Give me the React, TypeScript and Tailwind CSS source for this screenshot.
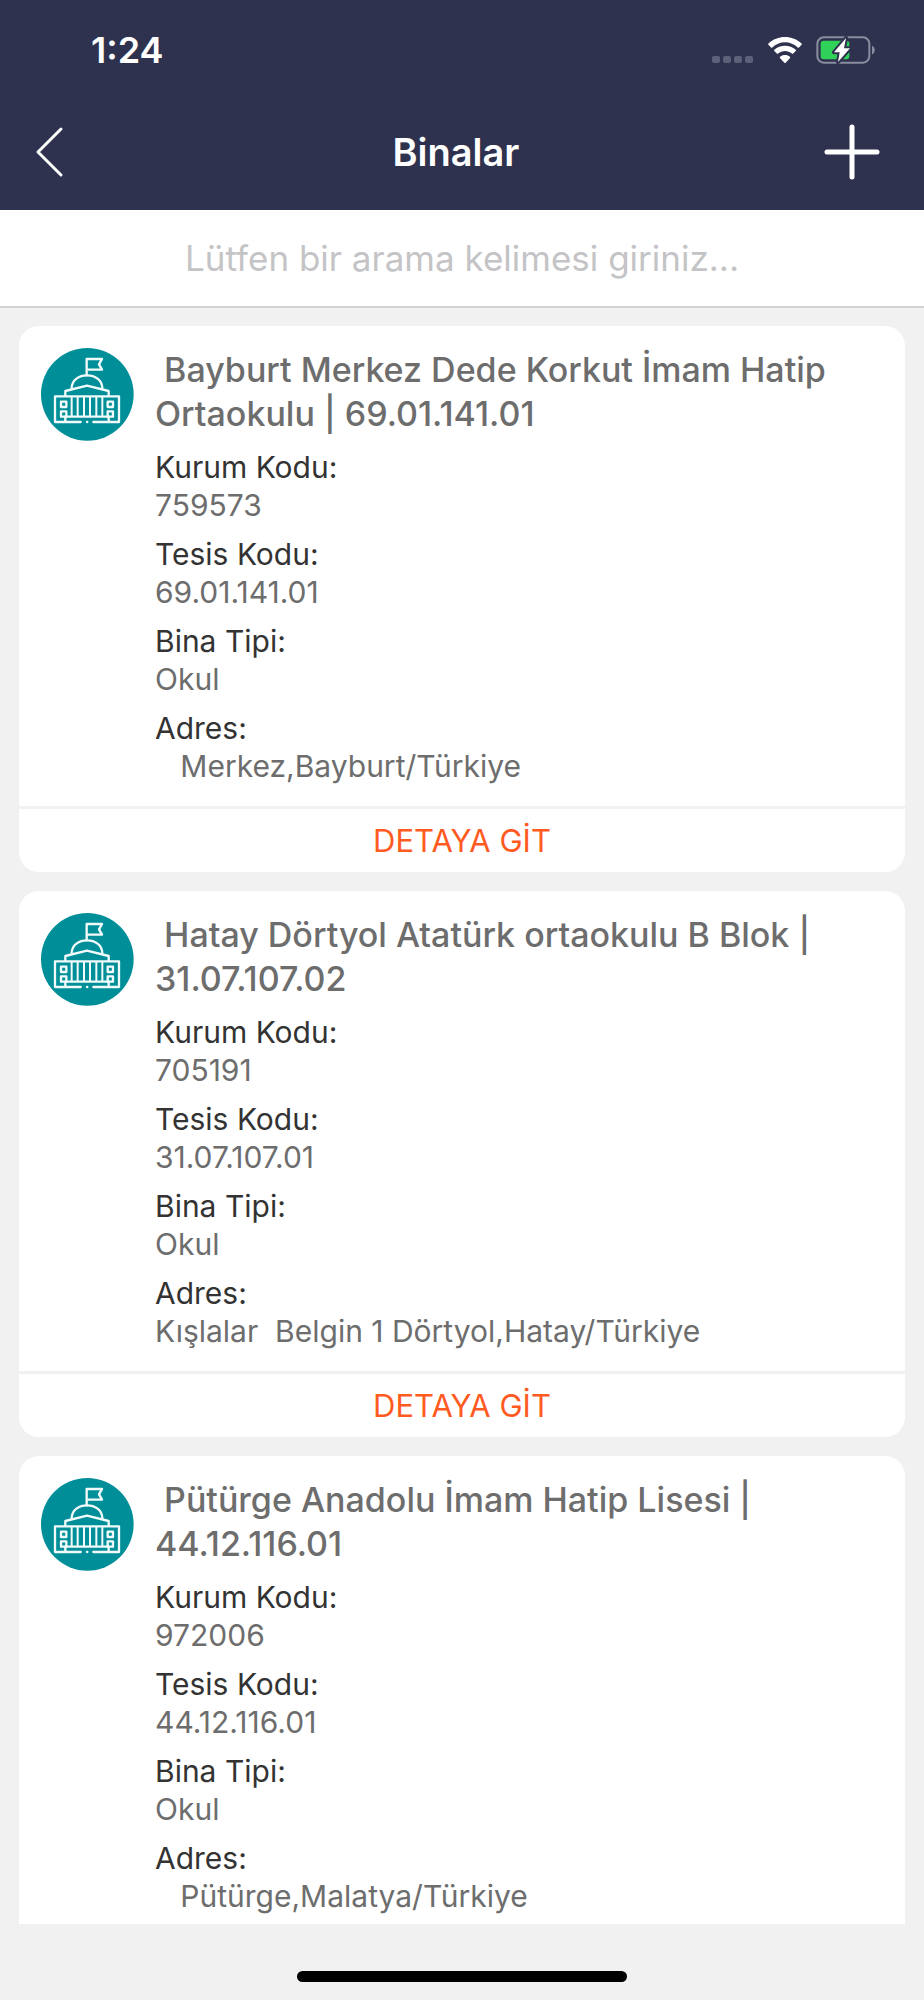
import React from 'react'

type Building = {
  title: string
  kurumKodu: string
  tesisKodu: string
  binaTipi: string
  adres: string
}

const buildings: Building[] = [
  {
    title: '\u00a0Bayburt Merkez Dede Korkut İmam Hatip Ortaokulu | 69.01.141.01',
    kurumKodu: '759573',
    tesisKodu: '69.01.141.01',
    binaTipi: 'Okul',
    adres: '   Merkez,Bayburt/Türkiye',
  },
  {
    title: '\u00a0Hatay Dörtyol Atatürk ortaokulu B Blok | 31.07.107.02',
    kurumKodu: '705191',
    tesisKodu: '31.07.107.01',
    binaTipi: 'Okul',
    adres: 'Kışlalar  Belgin 1 Dörtyol,Hatay/Türkiye',
  },
  {
    title: '\u00a0Pütürge Anadolu İmam Hatip Lisesi | 44.12.116.01',
    kurumKodu: '972006',
    tesisKodu: '44.12.116.01',
    binaTipi: 'Okul',
    adres: '   Pütürge,Malatya/Türkiye',
  },
]

const StatusBar = () => (
  <div className="flex h-[100px] items-center justify-between pr-12 pl-[91px]">
    <span className="text-[36px] leading-10 font-semibold">1:24</span>
    <div className="flex items-center gap-[13px]">
      <svg width="42" height="26" viewBox="0 0 42 26" fill="#5c6079">
        <rect x="0" y="19" width="8" height="7" rx="2" />
        <rect x="11" y="19" width="8" height="7" rx="2" />
        <rect x="22" y="19" width="8" height="7" rx="2" />
        <rect x="33" y="19" width="8" height="7" rx="2" />
      </svg>
      <svg width="36" height="26" viewBox="0 0 108 80" fill="#fff">
        <path d="M54 16 C69 16 83 22 93 32 Q95 34 97 32 L105 24 Q107 22 105 20 C91 7 73 0 54 0 C35 0 17 7 3 20 Q1 22 3 24 L11 32 Q13 34 15 32 C25 22 39 16 54 16 Z" />
        <path d="M54 43 C62 43 69 46 75 51 Q77 53 79 51 L87 43 Q89 41 87 39 C78 31 66 27 54 27 C42 27 30 31 21 39 Q19 41 21 43 L29 51 Q31 53 33 51 C39 46 46 43 54 43 Z" />
        <path d="M69 61 Q71 63 69 65 L56 79 Q54 81 52 79 L39 65 Q37 63 39 61 C43 57 48 55 54 55 C60 55 65 57 69 61 Z" />
      </svg>
      <svg width="60" height="28" viewBox="0 0 180 84" fill="none">
        <rect x="4" y="4" width="156" height="76" rx="19" stroke="#8a8d9f" strokeWidth="6" />
        <path d="M168 29 C179 33 179 51 168 55 Z" fill="#8a8d9f" />
        <rect x="14" y="14" width="86" height="56" rx="9" fill="#30d158" />
        <path
          d="M90 6 L54 49 H71 L66 78 L102 37 H84 Z"
          fill="#fff"
          stroke="#2e324f"
          strokeWidth="12"
          strokeLinejoin="round"
          paintOrder="stroke"
        />
      </svg>
    </div>
  </div>
)

const NavBar = () => (
  <nav className="grid h-[104px] grid-cols-[1fr_auto_1fr] items-center pr-11 pl-8">
    <button aria-label="Geri" className="justify-self-start">
      <svg width="34" height="56" viewBox="0 0 34 56" fill="none" stroke="#fff" strokeWidth="3" strokeLinecap="round" strokeLinejoin="round">
        <path d="M29 5 L6 28 L29 51" />
      </svg>
    </button>
    <h1 className="text-[38px] leading-[44px] font-semibold">Binalar</h1>
    <button aria-label="Ekle" className="justify-self-end">
      <svg width="56" height="56" viewBox="0 0 56 56" fill="none" stroke="#fff" strokeWidth="5" strokeLinecap="round">
        <path d="M28 3 V53 M3 28 H53" />
      </svg>
    </button>
  </nav>
)

const BuildingIcon = () => (
  <svg className="shrink-0" width="93" height="93" viewBox="0 0 279 279" fill="none" stroke="#f2fbfb" strokeWidth="7" strokeLinejoin="round" strokeLinecap="round">
    <circle cx="139" cy="139" r="139" fill="#008f99" stroke="none" />
    {/* flag */}
    <path d="M137 82 V33 H183 L174 49 L183 65 H139" />
    {/* dome and roof */}
    <path d="M92 121 C92 69 184 69 184 121" />
    <path d="M73 143 V129 L138 113 L203 129 V143" />
    {/* body */}
    <path d="M119 222 H42 V145 H234 V222 H157" />
    <path d="M138 222 H139" />
    <path d="M73 206 H203" />
    {/* columns */}
    <path d="M92 148 V203 M110 148 V203 M129 148 V203 M147 148 V203 M166 148 V203 M184 148 V203" strokeWidth="6" />
    {/* windows */}
    <path d="M60 161 H76 V177 H60 Z M200 161 H216 V177 H200 Z M60 190 H76 V206 H60 Z M200 190 H216 V206 H200 Z" />
    <path d="M73 208 V220 M203 208 V220" />
  </svg>
)

const Field = (props: { label: string; value: string }) => (
  <div>
    <dt className="text-[#333]">{props.label}</dt>
    <dd className="whitespace-pre-wrap text-[#6d6d6d]">{props.value}</dd>
  </div>
)

const BuildingCard = ({ building }: { building: Building }) => (
  <article className="shrink-0 overflow-hidden rounded-[20px] bg-white">
    <div className="flex gap-[21px] px-[22px] pt-[22px] pb-[21px]">
      <BuildingIcon />
      <div className="min-w-0 flex-1">
        <h2 className="text-[34px] leading-[44px] font-medium text-[#6d6d6d]">{building.title}</h2>
        <dl className="mt-3 flex flex-col gap-[11px] text-[30px] leading-[38px]">
          <Field label="Kurum Kodu:" value={building.kurumKodu} />
          <Field label="Tesis Kodu:" value={building.tesisKodu} />
          <Field label="Bina Tipi:" value={building.binaTipi} />
          <Field label="Adres:" value={building.adres} />
        </dl>
      </div>
    </div>
    <button className="h-[66px] w-full border-t-3 border-[#f1f1f1] text-[31px] leading-10 text-[#ff5a1f]">
      DETAYA GİT
    </button>
  </article>
)

const App = () => {
  return (
    <div className="flex h-screen flex-col bg-[#f1f1f1] font-['Inter',sans-serif]">
      <header className="bg-[#2e324f] pb-[6px] text-white">
        <StatusBar />
        <NavBar />
      </header>
      <input
        type="text"
        aria-label="Arama"
        placeholder="Lütfen bir arama kelimesi giriniz..."
        className="h-[98px] w-full shrink-0 border-b-2 border-[#d2d2d2] bg-white text-center text-[35px] text-[#333] outline-none placeholder:text-[#c4c4c6]"
      />
      <main className="flex min-h-0 flex-1 flex-col gap-[19px] overflow-y-auto px-[19px] pt-[18px] [scrollbar-width:none]">
        {buildings.map((building) => (
          <BuildingCard key={building.title} building={building} />
        ))}
      </main>
      <footer className="flex h-[76px] shrink-0 items-end justify-center pb-[18px]">
        <div className="h-[11px] w-[330px] rounded-full bg-black" />
      </footer>
    </div>
  )
}

export default App
